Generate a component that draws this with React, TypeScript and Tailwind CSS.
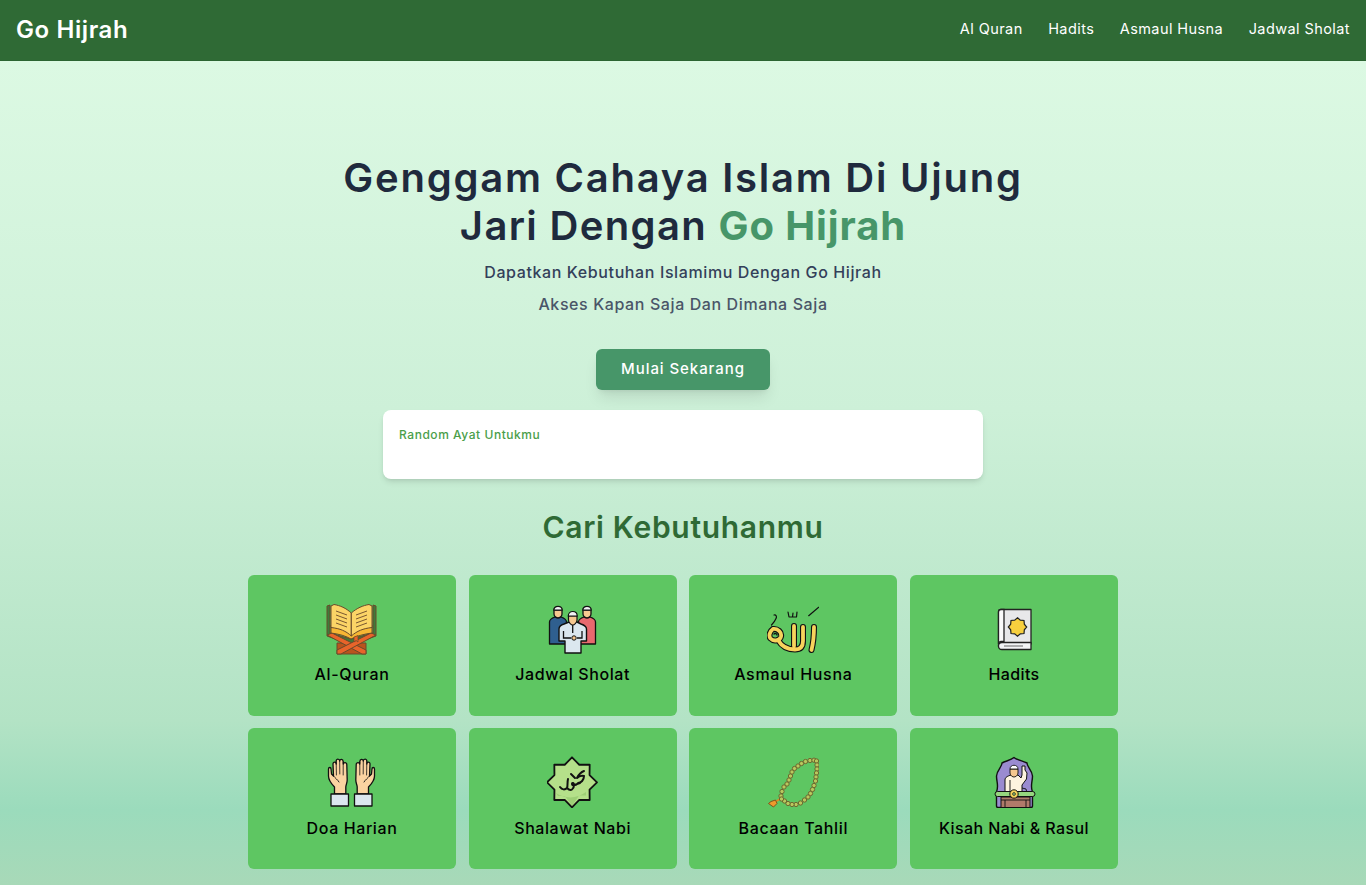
import React from "react";

const Svg = ({ children }: { children: React.ReactNode }) => (
  <svg viewBox="0 0 52 52" className="w-[52px] h-[52px] block" fill="none">{children}</svg>
);

const QuranIcon = () => (
  <Svg>
    <path d="M1 3 L4 2 L4 30 L25 36 L47 30 L47 2 L50 3 L50 33 L25.5 42 L1 33 Z" fill="#3f7a3a" stroke="#6a4a2a" strokeWidth="1" />
    <path d="M11 40 L40 40 L40 51 L11 51 Z" fill="#b9541d" stroke="#6a4a2a" strokeWidth="1" />
    <path d="M1 32 L6 30 L40 47 L40 51 L36 51 Z" fill="#e8642a" stroke="#6a4a2a" strokeWidth="1" strokeLinejoin="round" />
    <path d="M50 32 L45 30 L11 47 L11 51 L15 51 Z" fill="#e8642a" stroke="#6a4a2a" strokeWidth="1" strokeLinejoin="round" />
    <path d="M5 22 L5 30 C13 31 20 33 25 36 C31 33 38 31 46 30 L46 22 Z" fill="#f7b733" stroke="#6a4a2a" strokeWidth="1" />
    <path d="M8 1.5 C14 2.5 20 5 25.3 10 L25.3 33 C20 28 14 25.5 5 24.5 L5 3 Z" fill="#fbd466" stroke="#6a4a2a" strokeWidth="1" strokeLinejoin="round" />
    <path d="M43 1.5 C37 2.5 31 5 25.3 10 L25.3 33 C31 28 37 25.5 46 24.5 L46 3 Z" fill="#fbd466" stroke="#6a4a2a" strokeWidth="1" strokeLinejoin="round" />
    <path d="M10 8 L21 12 M10 12 L21 16 M10 16 L21 20 M10 20 L21 24 M41 8 L30 12 M41 12 L30 16 M41 16 L30 20 M41 20 L30 24" stroke="#6a4a2a" strokeWidth="0.9" />
    <path d="M28 34 L32 32.5 L32 39 L30 37.5 L28 39 Z" fill="#e8642a" stroke="#6a4a2a" strokeWidth="0.7" />
  </Svg>
);

const Man = ({ cx, top, body }: { cx: number; top: number; body: string }) => (
  <g stroke="#111" strokeWidth="1.3" strokeLinejoin="round">
    <path d={`M${cx - 8.5} ${top + 28} L${cx - 8.5} ${top + 16} C${cx - 8.5} ${top + 13} ${cx - 6} ${top + 12} ${cx - 3} ${top + 11} L${cx + 3} ${top + 11} C${cx + 6} ${top + 12} ${cx + 8.5} ${top + 13} ${cx + 8.5} ${top + 16} L${cx + 8.5} ${top + 38} L${cx - 8.5} ${top + 38} Z`} fill={body} />
    <path d={`M${cx - 4} ${top + 4} L${cx + 4} ${top + 4} L${cx + 4} ${top + 8} C${cx + 4} ${top + 11} ${cx + 1} ${top + 12} ${cx} ${top + 12} C${cx - 1} ${top + 12} ${cx - 4} ${top + 11} ${cx - 4} ${top + 8} Z`} fill="#f6c890" />
    <path d={`M${cx - 4.2} ${top + 4.2} C${cx - 4.2} ${top - 1} ${cx + 4.2} ${top - 1} ${cx + 4.2} ${top + 4.2} Z`} fill="#f3f4f6" />
  </g>
);

const PeopleIcon = () => (
  <Svg>
    <Man cx={11} top={3} body="#2f5f8f" />
    <Man cx={40} top={3} body="#e8696e" />
    <path d="M17 21 C14 22 12 23 12 26 L12 38 L18 38 L18 50 L34 50 L34 38 L39.5 38 L39.5 26 C39.5 23 37 22 34 21 L30 19 L22 19 Z" fill="#dbe7ef" stroke="#111" strokeWidth="1.4" strokeLinejoin="round" />
    <path d="M21.5 13 L30 13 L30 17 C30 20 27 22 25.7 22 C24.5 22 21.5 20 21.5 17 Z" fill="#f6c890" stroke="#111" strokeWidth="1.2" />
    <path d="M21.3 13 C21.3 7 30.2 7 30.2 13 Z" fill="#f3f4f6" stroke="#111" strokeWidth="1.2" />
    <path d="M16.5 28 L16.5 35 L24 35 M35 28 L35 35 L30 35 M25.7 22 L25.7 30" stroke="#111" strokeWidth="1.3" />
    <circle cx="27" cy="35" r="2.2" fill="#f6c890" stroke="#111" strokeWidth="1" />
  </Svg>
);

const AllahIcon = () => {
  const d = "M47 24 C47 32 46 41 44.5 47 M36 24 L36 38 C36 44 33 46.5 28 46.5 C21 46.5 15 44 11 37 M27 23 L27 43";
  const loop = "M6 26 C2.5 28.5 1.5 33 3.5 35.5 C7 39 13 37.5 14 33.5 C15 29 10.5 25.5 6 26 Z";
  return (
    <Svg>
      <path d={d} stroke="#111" strokeWidth="6" strokeLinecap="round" />
      <path d={loop} stroke="#111" strokeWidth="6" />
      <path d={d} stroke="#f7d35c" strokeWidth="3.8" strokeLinecap="round" />
      <path d={loop} stroke="#f7d35c" strokeWidth="3.8" />
      <path d="M7 31 C8 30 10 30.5 10 32" stroke="#111" strokeWidth="1.4" strokeLinecap="round" />
      <path d="M41.7 12.7 L51.7 4.3 M21 9 L22 14 L25.5 14 L26 10 M26 14 L29.5 14 L30 9 M7 12 C9 11.5 10 13.5 9 15.5 C8 18 6.5 20 4.5 22" stroke="#111" strokeWidth="1.2" strokeLinecap="round" strokeLinejoin="round" />
    </Svg>
  );
};

const HaditsIcon = () => {
  const pts: string[] = [];
  for (let i = 0; i < 16; i++) {
    const a = (Math.PI * 2 * i) / 16;
    const r = i % 2 === 0 ? 9.2 : 7.4;
    pts.push(`${(29.5 + r * Math.sin(a)).toFixed(2)},${(24 - r * Math.cos(a)).toFixed(2)}`);
  }
  return (
    <Svg>
      <path d="M13 6.5 L43 6.5 L43 41 L14 41 C11.5 41 10.5 42 10.5 43.5 L10.5 9 C10.5 7.5 11.5 6.5 13 6.5 Z" fill="#e8e8ea" stroke="#222" strokeWidth="1.3" strokeLinejoin="round" />
      <path d="M13 6.5 L16 6.5 L16 38.5 L13 38.5 C12 38.5 10.5 39.5 10.5 41 L10.5 9 C10.5 7.5 11.5 6.5 13 6.5 Z" fill="#fafafa" stroke="#222" strokeWidth="1.3" />
      <path d="M10.5 43 C10.5 40.5 12 39.5 14 39.5 L43 39.5 L43 46.5 L14 46.5 C12 46.5 10.5 45.5 10.5 43 Z" fill="#f3f4f6" stroke="#222" strokeWidth="1.3" strokeLinejoin="round" />
      <path d="M16 43 L35 43" stroke="#666" strokeWidth="1" />
      <polygon points={pts.join(" ")} fill="#f7cf3e" stroke="#222" strokeWidth="1.2" />
    </Svg>
  );
};

const Hand = ({ flip }: { flip?: boolean }) => (
  <g transform={flip ? "translate(52,0) scale(-1,1) translate(1,0)" : undefined} stroke="#111" strokeWidth="1.3" strokeLinejoin="round" strokeLinecap="round">
    <path d="M8.5 38 L8.5 31 C5.5 28 2.5 25 2.5 20 L2.5 13 C2.5 11 5 11 5 13 L5.5 18 L7.5 20 L7 8 C7 5.5 10 5.5 10.2 8 L10.2 5 C10.2 2.5 13.6 2.5 13.7 5 C13.9 2.7 17 3 17.2 5.5 L17.3 8 C17.8 5.8 20.8 6.2 20.8 8.5 L21.2 24 C21.2 27 19.8 29 19.8 31 L19.8 38 Z" fill="#fbd3a1" />
    <path d="M10.2 7 L10.4 19 M13.7 5 L13.8 18 M17.2 6 L17.2 19" strokeWidth="0.8" />
    <path d="M7.5 20 C9 22 12 24 13 26" strokeWidth="0.9" />
    <rect x="5" y="38" width="17.5" height="12" fill="#dbe7ef" />
  </g>
);

const DoaIcon = () => (
  <Svg>
    <Hand />
    <Hand flip />
  </Svg>
);

const ShalawatIcon = () => {
  const pts: string[] = [];
  for (let i = 0; i < 16; i++) {
    const a = (Math.PI * 2 * i) / 16;
    const r = i % 2 === 0 ? 25 : 19;
    pts.push(`${(25 + r * Math.sin(a)).toFixed(2)},${(26.3 - r * Math.cos(a)).toFixed(2)}`);
  }
  const p = pts.join(" ");
  return (
    <Svg>
      <polygon points={p} fill="#b5e08a" />
      <path d="M9 37 C18 43 30 43 39 36 L39 39.5 L32 39.5 L25 50 L18 40 L11 40 Z" fill="#9ecf76" />
      <polygon points={p} fill="none" stroke="#111" strokeWidth="1.8" strokeLinejoin="round" />
      <path d="M13 31 C15 34 18 34 20 32 C21 30 20 27 21 23 M20 32 C24 36 27 33 27 29 C27 27 25 26 25 28 C25 30 29 30 31 27 C34 27 37 24 37 20 C34 19 32 20 30 22 C32 18 34 16 37 15 M27 29 L33 27 M24 18 L28 22" stroke="#111" strokeWidth="2" strokeLinecap="round" strokeLinejoin="round" />
    </Svg>
  );
};

const beads = [
  [14, 40], [15, 35.5], [17, 31], [20, 28], [22, 24], [23.5, 20], [25, 16], [27.5, 12.5], [31, 10], [34.5, 7.5],
  [38.5, 5.5], [43, 4.5], [47, 4.2], [49.5, 5], [50, 9], [50, 13], [49.5, 17], [49, 21], [48.5, 25], [47, 29.5],
  [45.5, 33.5], [43.5, 37.5], [41, 41], [37.5, 44], [33.5, 47], [29, 48.5], [25, 48.5], [21, 47.5], [17.5, 45], [14.5, 43],
];

const TahlilIcon = () => (
  <Svg>
    <path d="M13 43 L8 46" stroke="#e08a1e" strokeWidth="2" />
    <path d="M8.5 44 L10 47.5 L6.5 51 L1.5 47.5 L4 45.5 Z" fill="#ee9a2c" stroke="#7a4a1a" strokeWidth="0.9" strokeLinejoin="round" />
    {beads.map(([x, y], i) => (
      <circle key={i} cx={x} cy={y} r="2.15" fill="#b8c95e" stroke="#6a5f2a" strokeWidth="0.9" />
    ))}
  </Svg>
);

const KisahIcon = () => (
  <Svg>
    <path d="M26 1.5 C29 4 35 5 39 7 C39 11 44 14 44.5 20 C44.5 26 42 30 44.5 36 L44.5 50 C44.5 51 44 51.5 43 51.5 L10 51.5 C9 51.5 8.5 51 8.5 50 L8.5 36 C11 30 8.5 26 8.5 20 C9 14 14 11 14 7 C18 5 23 4 26 1.5 Z" fill="#9a8bd0" stroke="#111" strokeWidth="1.4" strokeLinejoin="round" />
    <path d="M17 37 L17 24 C17 21 20 20 23 19 L30 19 L33 22 L34 19 L34 10 L37 10 L37 14 L39 17 L38.5 23 L34 29 L34 37 Z" fill="#fdf3df" stroke="#111" strokeWidth="1" strokeLinejoin="round" />
    <path d="M22 13 L30 13 L30 17 C30 20 27 21 26 21 C25 21 22 20 22 17 Z" fill="#f6c890" stroke="#111" strokeWidth="0.9" />
    <path d="M22 13 C22 8 30 8 30 13 Z" fill="#fff" stroke="#111" strokeWidth="0.9" />
    <path d="M22 24 L22 36 M34 32 L38 33 L39 37" stroke="#111" strokeWidth="0.9" />
    <rect x="13" y="41" width="29" height="10.5" fill="#b07a6a" stroke="#111" strokeWidth="1" />
    <path d="M17 44 L17 51.5 M38 44 L38 51.5 M13 44 L42 44" stroke="#111" strokeWidth="0.9" />
    <rect x="7" y="35.5" width="40" height="5" rx="2.5" fill="#96d67e" stroke="#111" strokeWidth="1" />
    <circle cx="26" cy="38" r="4.2" fill="#f7d35c" stroke="#111" strokeWidth="1" />
    <circle cx="26" cy="38" r="1.4" fill="#96d67e" stroke="#111" strokeWidth="0.7" />
  </Svg>
);

const items: [string, React.ComponentType, string][] = [
  ["Al-Quran", QuranIcon, "tracking-[0.7px]"],
  ["Jadwal Sholat", PeopleIcon, "tracking-[0.6px]"],
  ["Asmaul Husna", AllahIcon, "tracking-[0.7px]"],
  ["Hadits", HaditsIcon, "tracking-[0.4px]"],
  ["Doa Harian", DoaIcon, "tracking-[0.6px]"],
  ["Shalawat Nabi", ShalawatIcon, "tracking-[0.58px]"],
  ["Bacaan Tahlil", TahlilIcon, "tracking-[0.66px]"],
  ["Kisah Nabi & Rasul", KisahIcon, "tracking-[0.42px]"],
];

export default function App() {
  return (
    <div className="h-[885px] overflow-hidden font-['Inter',sans-serif]">
      <nav className="h-[61px] bg-[#2f6a35] flex items-center justify-between pl-4 pr-4 border-b border-[#2c6532]">
        <span className="text-white text-[24px] font-semibold tracking-[0.6px]">Go Hijrah</span>
        <ul className="flex gap-[25.5px] text-white text-[14.5px] font-normal tracking-[0.42px] pb-[3px]">
          <li>Al Quran</li>
          <li>Hadits</li>
          <li>Asmaul Husna</li>
          <li>Jadwal Sholat</li>
        </ul>
      </nav>
      <main className="h-[824px] bg-[linear-gradient(180deg,#dcf9e3_0px,#cdf0d8_349px,#b3e3c5_660px,#9bdbbc_749px,#a8d9b8_824px)] flex flex-col items-center pt-[93px]">
        <h1 className="text-[40px] leading-[48px] font-semibold text-[#1f2a3d] text-center">
          <span className="tracking-[1.75px]">Genggam Cahaya Islam Di Ujung</span>
          <br />
          <span className="tracking-[1.35px]">Jari Dengan </span>
          <span className="tracking-[0.9px] font-bold text-[#479669]">Go Hijrah</span>
        </h1>
        <p className="mt-[6px] text-[16px] leading-[32px] font-medium text-[#33405a] tracking-[0.61px]">Dapatkan Kebutuhan Islamimu Dengan Go Hijrah</p>
        <p className="text-[16px] leading-[32px] font-medium text-[#4a5568] tracking-[0.6px]">Akses Kapan Saja Dan Dimana Saja</p>
        <button className="mt-[29px] w-[174px] h-[41px] rounded-md bg-[#479669] text-white text-[15px] font-medium tracking-[0.93px] shadow-lg">Mulai Sekarang</button>
        <div className="mt-[20px] w-[600px] h-[69px] bg-white rounded-lg shadow-md px-4 pt-[17px]">
          <p className="text-[12px] leading-4 font-medium text-[#4a9e4a] tracking-[0.55px]">Random Ayat Untukmu</p>
        </div>
        <h2 className="mt-[27px] text-[30px] leading-[42px] font-semibold text-[#2f6a35] tracking-[0.7px]">Cari Kebutuhanmu</h2>
        <div className="mt-[27px] w-[870px] grid grid-cols-4 gap-x-[12.7px] gap-y-[12.4px]">
          {items.map(([label, Icon, track]) => (
            <div key={label} className="h-[141px] rounded-md bg-[#5ec662] flex flex-col items-center pt-[28px]">
              <Icon />
              <span className={`mt-[7.2px] text-[16px] leading-6 font-medium text-black ${track}`}>{label}</span>
            </div>
          ))}
        </div>
      </main>
    </div>
  );
}
